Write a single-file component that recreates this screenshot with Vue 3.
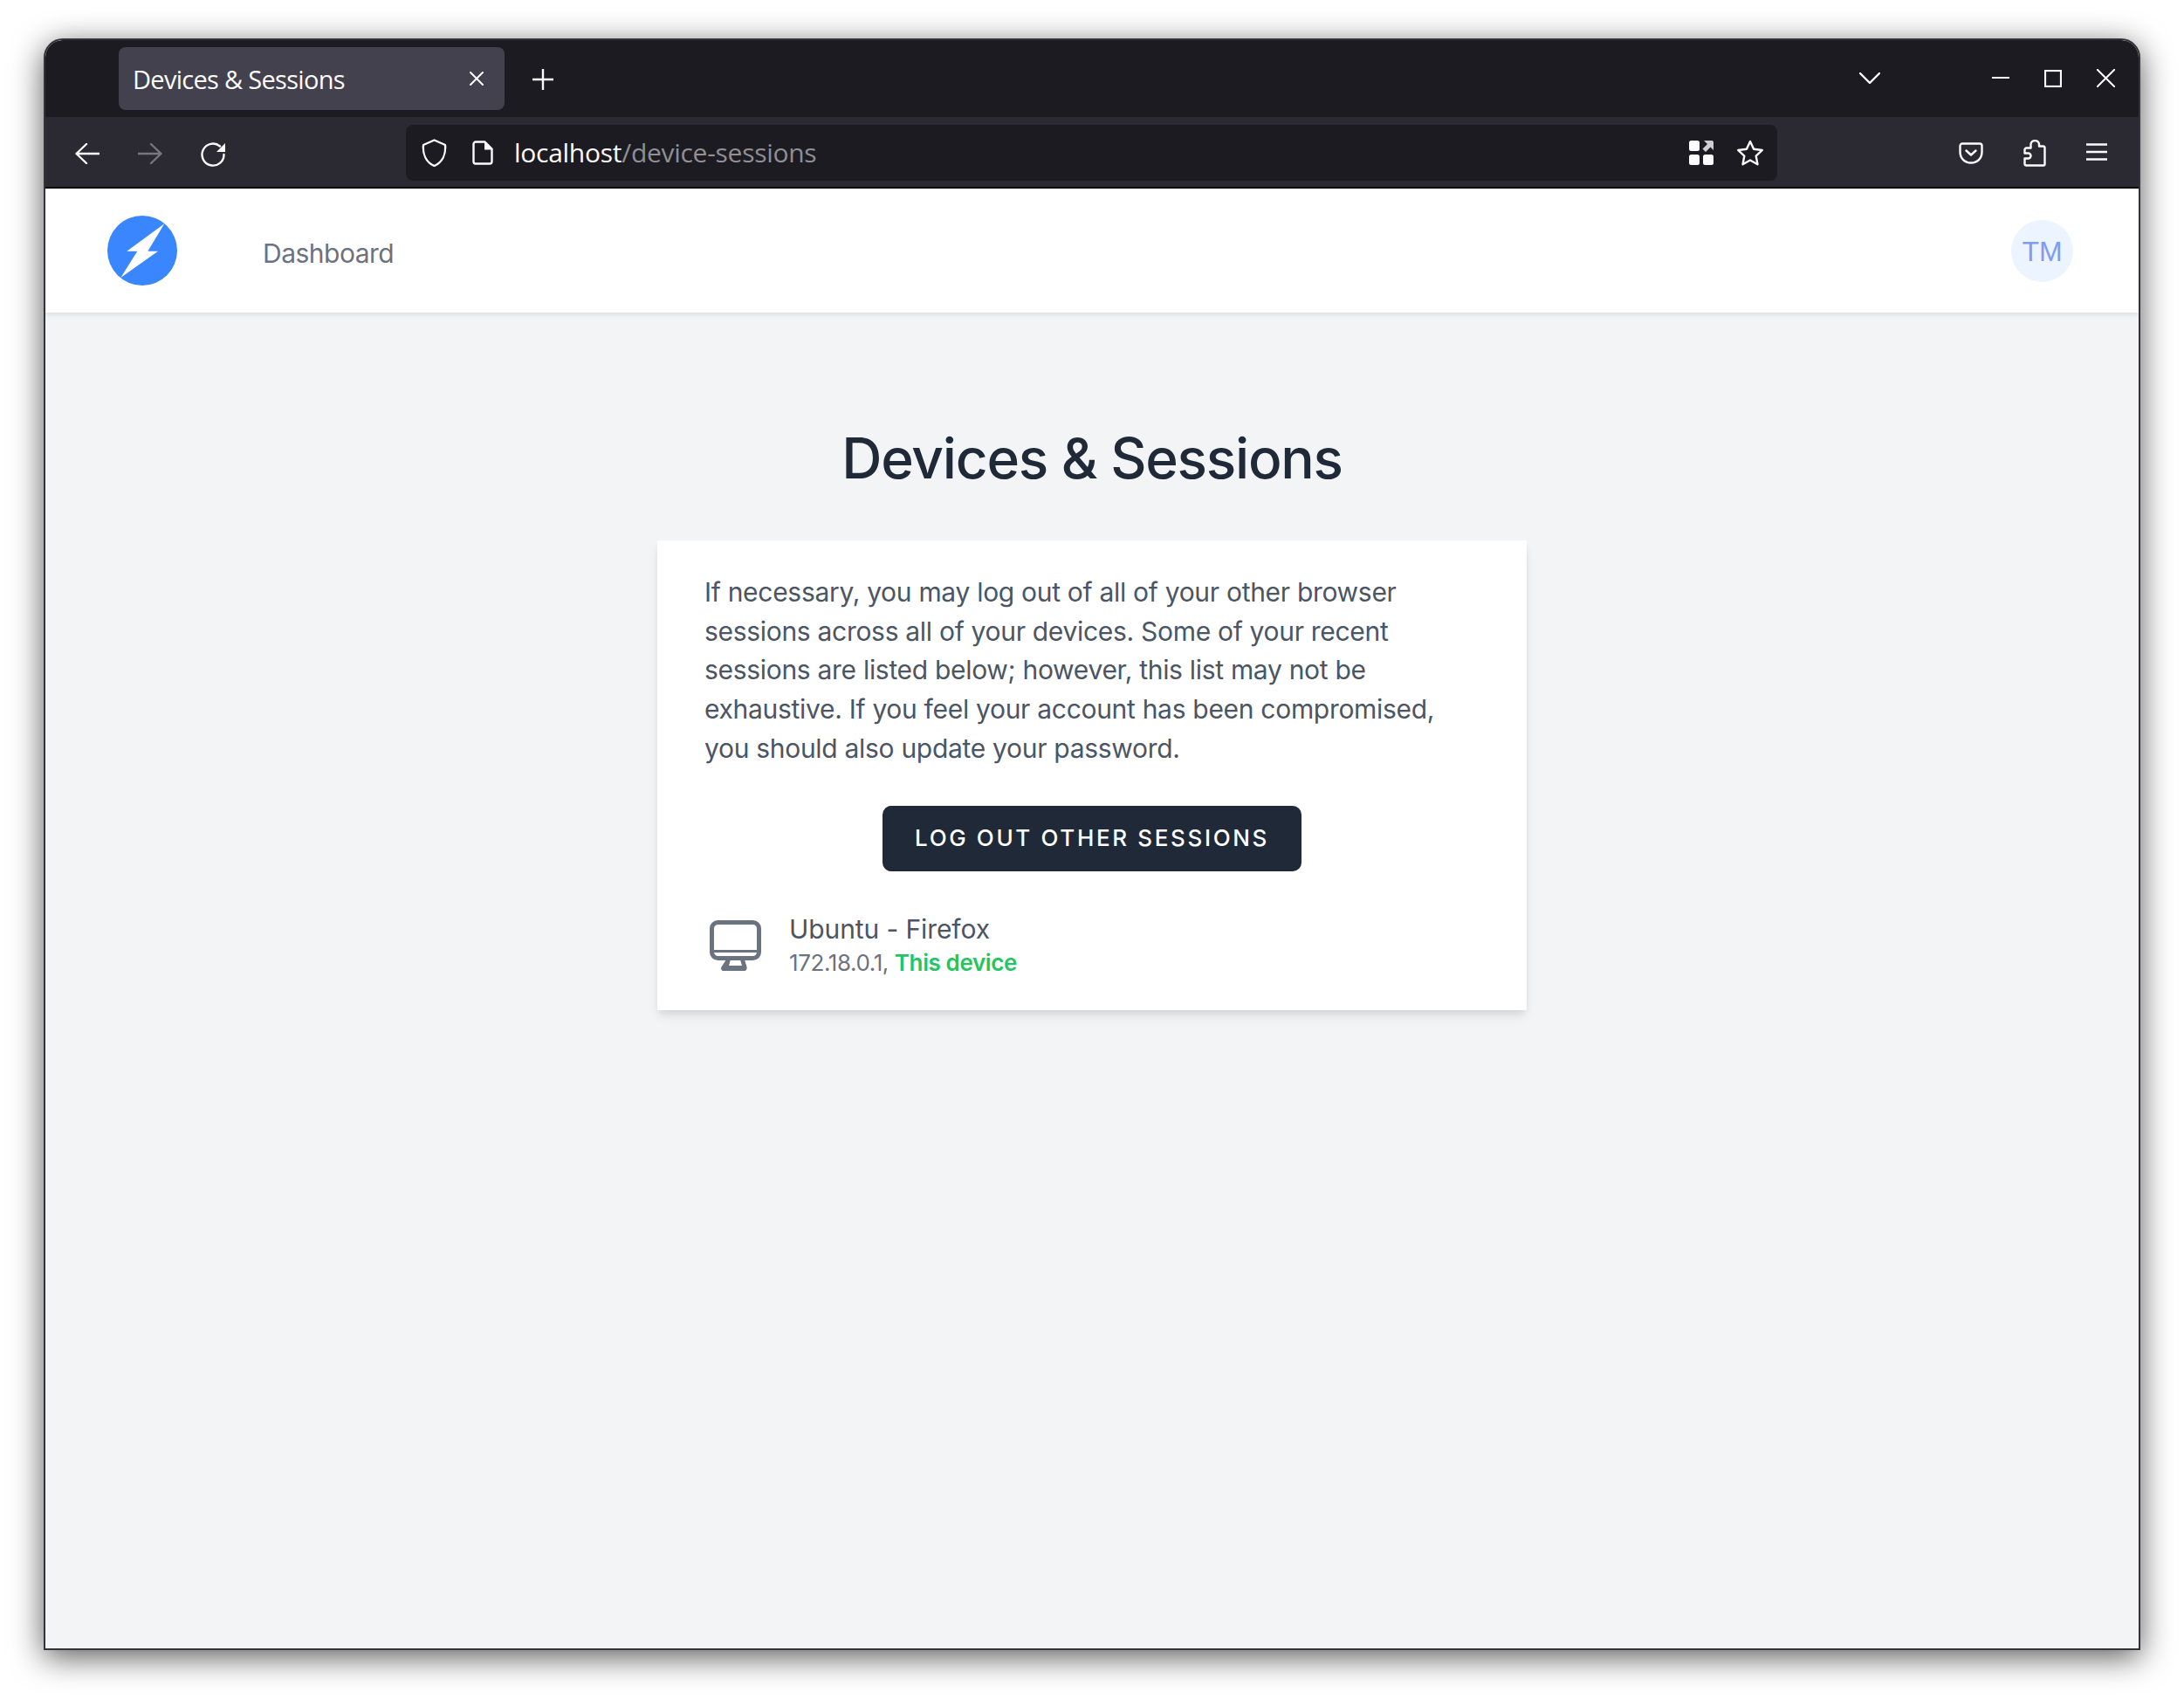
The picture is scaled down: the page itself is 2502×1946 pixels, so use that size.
<template>
  <div class="desktop">
    <div class="window">
      <div class="titlebar">
        <div class="tab">
          <span class="tab-title">Devices &amp; Sessions</span>
          <svg class="tab-close" width="18" height="16" viewBox="0 0 18 16"><path d="M2 1l14 14M16 1L2 15" /></svg>
        </div>
        <svg class="new-tab" width="24" height="24" viewBox="0 0 24 24"><path d="M12 0v24M0 12h24" /></svg>
        <svg class="tab-list" width="24" height="13" viewBox="0 0 24 13"><path d="M1 1l11 11L23 1" /></svg>
        <svg class="win-min" width="20" height="2" viewBox="0 0 20 2"><path d="M0 1h20" /></svg>
        <svg class="win-max" width="20" height="20" viewBox="0 0 20 20"><rect x="1" y="1" width="18" height="18" /></svg>
        <svg class="win-close" width="21" height="21" viewBox="0 0 21 21"><path d="M.5.5l20 20M20.5.5l-20 20" /></svg>
      </div>

      <div class="toolbar">
        <svg class="ic-back" width="28" height="24" viewBox="0 0 28 24"><path d="M1.5 12H28M13 1L1.5 12 13 23" /></svg>
        <svg class="ic-forward" width="28" height="24" viewBox="0 0 28 24"><path d="M0 12h26.5M15 1l11.500 11L15 23" /></svg>
        <svg class="ic-reload" width="28" height="28" viewBox="0 0 28 28">
          <path d="M22 4.500A12.500 12.500 0 1 0 26.500 14" />
          <path class="solid" d="M28 1v10H18z" />
        </svg>

        <div class="urlbar">
          <svg class="ic-shield" width="29" height="32" viewBox="0 0 29 32"><path d="M14.500 1.500L27 7c1 11-3.500 20-12.500 24C5.500 27 1 18 2 7z" /></svg>
          <svg class="ic-page" width="24" height="28" viewBox="0 0 24 28">
            <path d="M4 1.500h10.500l8 8V24a2.500 2.500 0 0 1-2.500 2.500H4A2.500 2.500 0 0 1 1.500 24V4A2.500 2.500 0 0 1 4 1.500z" />
            <path class="solid" d="M14 1.500h1l8 8v1h-9z" />
          </svg>
          <span class="url"><span class="url-host">localhost</span>/device-sessions</span>
          <svg class="ic-grid" width="28" height="28" viewBox="0 0 28 28">
            <rect class="solid" width="12" height="12" rx="2.500" />
            <rect class="solid" y="16" width="12" height="12" rx="2.500" />
            <rect class="solid" x="16" y="16" width="12" height="12" rx="2.500" />
            <path class="arrow" d="M17 0h9a2 2 0 0 1 2 2v9l-3.500-3.500L19 13l-3.500-3.500L21 4z" />
          </svg>
          <svg class="ic-star" width="32" height="31" viewBox="0 0 32 31"><path d="M16 2l4.100 8.800 9.700 1.200-7.100 6.700 1.800 9.500L16 23.500l-8.500 4.700 1.800-9.500L2.200 12l9.700-1.200z" /></svg>
        </div>

        <svg class="ic-pocket" width="28" height="25" viewBox="0 0 28 25">
          <path d="M4 1.500h20A2.500 2.500 0 0 1 26.500 4v7c0 7.500-5.500 12.500-12.500 12.500S1.500 18.500 1.500 11V4A2.500 2.500 0 0 1 4 1.500z" />
          <path d="M8.500 9.500L14 14.500l5.500-5" />
        </svg>
        <svg class="ic-puzzle" width="26" height="32" viewBox="0 0 26 32"><path d="M3.500 30.500H23a1.500 1.500 0 0 0 1.500-1.500V10.500A2 2 0 0 0 22.500 8.500H18V6A4.800 4.500 0 0 0 8.500 6V10.500H3.500A2 2 0 0 0 1.500 12.500V16.500H5.500A3 3 0 0 1 5.500 22.500H1.500V28.500a2 2 0 0 0 2 2z" /></svg>
        <svg class="ic-menu" width="24" height="20" viewBox="0 0 24 20"><path d="M0 1.500h24M0 10h24M0 18.500h24" /></svg>
      </div>

      <div class="app">
        <nav class="nav">
          <svg class="logo" width="80" height="80" viewBox="0 0 80 80">
            <circle cx="40" cy="40" r="40" fill="#3a86ff" />
            <path d="M65.300 9.300L46.300 40.700H58L15.300 71 34.300 40.700H22.300z" />
          </svg>
          <a class="nav-link">Dashboard</a>
          <div class="avatar">TM</div>
        </nav>

        <main class="main">
          <h1 class="heading">Devices &amp; Sessions</h1>
          <section class="card">
            <p class="intro">
              If necessary, you may log out of all of your other browser<br>
              sessions across all of your devices. Some of your recent<br>
              sessions are listed below; however, this list may not be<br>
              exhaustive. If you feel your account has been compromised,<br>
              you should also update your password.
            </p>
            <button class="logout">LOG OUT OTHER SESSIONS</button>
            <div class="device" v-for="s in sessions" :key="s.ip">
              <svg class="device-icon" width="59" height="58" viewBox="0 0 59 58">
                <rect x="2.500" y="2.500" width="54" height="41" rx="7" />
                <path class="thin" d="M3 35.500h53" />
                <path class="solid" d="M19 45h5l-2 7h15l-2-7h5l2.500 8.500c.6 2-.5 4.500-2.500 4.500H15.500c-2 0-3-2.500-2-4.500z" />
              </svg>
              <div>
                <div class="device-name">{{ s.name }}</div>
                <div class="device-meta">{{ s.ip }}, <span class="this-device">This device</span></div>
              </div>
            </div>
          </section>
        </main>
      </div>
    </div>
  </div>
</template>

<script setup>
const sessions = [{ name: 'Ubuntu - Firefox', ip: '172.18.0.1' }]
</script>

<style>
html, body { margin: 0; background: #fff; }
</style>

<style scoped>
.desktop { width: 2502px; height: 1946px; padding: 44px 50px 56px; box-sizing: border-box; overflow: hidden; background: #fff; }
.window { height: 100%; box-sizing: border-box; border: 2px solid #333238; border-radius: 22px 22px 0 0; display: flex; flex-direction: column; box-shadow: 0 8px 36px rgba(0, 0, 0, 0.65); overflow: hidden; background: #f3f4f6; }

svg { display: block; flex: none; }
svg path, svg rect { fill: none; stroke: #fbfbfe; stroke-width: 2.400; stroke-linecap: round; stroke-linejoin: round; }
svg path.solid, svg rect.solid { fill: #fbfbfe; stroke: none; }

.titlebar { height: 88px; flex: none; background: #1c1b22; display: flex; align-items: center; padding-left: 84px; }
.tab { width: 442px; height: 72px; box-sizing: border-box; padding: 0 23px 0 16px; background: #42414d; border-radius: 8px; display: flex; align-items: center; justify-content: space-between; }
.tab-title { color: #fbfbfe; font: 400 29px "Open Sans", sans-serif; letter-spacing: -0.700px; white-space: nowrap; }
.new-tab { margin: 2px 0 0 32px; }
.tab-list { margin: -1px 0 0 1496px; }
.win-min { margin: -2px 0 0 128px; }
.win-max { margin: 0 0 0 40px; }
.win-max rect { stroke-width: 2.200; stroke-linecap: butt; stroke-linejoin: miter; }
.win-close { margin: -1px 0 0 40px; }
.tab-close path, .win-close path { stroke-width: 2; }

.toolbar { height: 80px; flex: none; border-bottom: 2px solid #0c0c0d; background: #2b2a33; display: flex; align-items: center; padding-left: 34px; }
.ic-back { margin-top: 4px; }
.ic-forward { margin: 4px 0 0 44px; }
.ic-forward path { stroke: #77767c; }
.ic-reload { margin: 6px 0 0 44px; }
.urlbar { width: 1571px; height: 64px; margin: 2px 0 0 207px; padding: 0 15px 0 18px; box-sizing: border-box; border-radius: 8px; background: #1c1b22; display: flex; align-items: center; }
.ic-page { margin-left: 29px; }
.url { margin: -1px 0 0 24px; flex: 1; color: #8f8f94; font: 400 30px "Open Sans", sans-serif; letter-spacing: -0.280px; white-space: nowrap; }
.url-host { color: #fbfbfe; }
.ic-star { margin-left: 26px; }
.ic-grid .arrow { fill: #cfcfd2; stroke: none; }
.ic-pocket { margin: 3px 0 0 208px; }
.ic-puzzle { margin: 2px 0 0 46px; }
.ic-menu { margin: -1px 0 0 46px; }

.app { flex: 1; display: flex; flex-direction: column; min-height: 0; font-family: Inter, sans-serif; }
.nav { height: 142px; flex: none; background: #fff; display: flex; align-items: center; padding: 0 75px 0 71px; box-shadow: 0 2px 6px rgba(0, 0, 0, 0.1); position: relative; }
.logo path { fill: #fff; stroke: none; }
.nav-link { margin: 6px 0 0 98px; color: #6b7280; font-size: 30px; letter-spacing: -0.500px; }
.avatar { margin-left: auto; padding-top: 2px; box-sizing: border-box; width: 71px; height: 71px; border-radius: 50%; background: #ebf4ff; color: #7f9cf5; font: 400 32px "Liberation Sans", sans-serif; display: flex; align-items: center; justify-content: center; }

.main { flex: 1; display: flex; flex-direction: column; align-items: center; }
.heading { margin: 130px 0 0; color: #1f2937; font-size: 64px; line-height: 74px; font-weight: 550; letter-spacing: -1.250px; }
.card { width: 996px; height: 538px; margin-top: 57px; box-sizing: border-box; padding: 37px 54px 0 54px; background: #fff; box-shadow: 0 8px 12px -2px rgba(0, 0, 0, 0.1), 0 4px 8px -2px rgba(0, 0, 0, 0.06); }
.intro { margin: 0; color: #4b5563; font-size: 30px; line-height: 44.670px; letter-spacing: -0.300px; white-space: nowrap; }
.logout { display: block; width: 480px; height: 75px; margin: 44px auto 0; padding: 0 0 2px; border: none; border-radius: 10px; background: #1f2937; color: #fff; font: 500 26px Inter, sans-serif; letter-spacing: 2.640px; }
.device { display: flex; align-items: center; gap: 32px; margin: 46px 0 0 6px; }
.device-icon rect { stroke: #6b7280; stroke-width: 5; }
.device-icon path.thin { stroke: #6b7280; stroke-width: 3; }
.device-icon path.solid { fill: #6b7280; }
.device-name { color: #4b5563; font-size: 30px; line-height: 40px; letter-spacing: -0.100px; }
.device-meta { color: #6b7280; font-size: 26px; line-height: 38px; letter-spacing: -0.400px; }
.this-device { color: #22c55e; font-weight: 600; }
</style>
